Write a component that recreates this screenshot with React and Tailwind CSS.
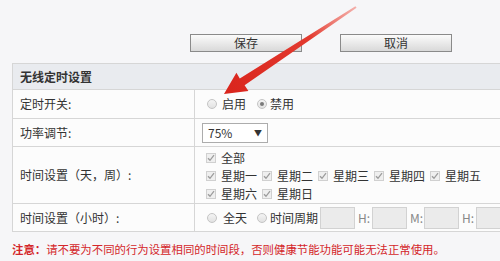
import React from 'react';

const font = "font-['Microsoft_YaHei','Noto_Sans_CJK_SC',sans-serif]";

function Radio({ checked }) {
  return (
    <span className="w-[10px] h-[10px] rounded-full border border-[#c4c4c4] bg-gradient-to-b from-[#f4f4f4] to-[#e2e2e2] flex items-center justify-center shrink-0">
      {checked && <span className="w-[4px] h-[4px] rounded-full bg-[#7a7a7a]" />}
    </span>
  );
}

function Check() {
  return (
    <span className="w-[10px] h-[10px] border border-[#d0d0d0] bg-[#efefef] flex items-center justify-center shrink-0">
      <svg width="8" height="8" viewBox="0 0 8 8">
        <path d="M1 4.2 L3 6.3 L7 1.2" fill="none" stroke="#9c9c9c" strokeWidth="1.3" />
      </svg>
    </span>
  );
}

function Day({ label }) {
  return (
    <span className="flex items-center w-[56px] shrink-0">
      <Check />
      <span className="ml-[5px]">{label}</span>
    </span>
  );
}

function Row({ label, h, children }) {
  return (
    <div className={`flex border-b border-[#d6d6d6] ${h}`}>
      <div className="w-[182px] shrink-0 border-r border-[#d6d6d6] flex items-center pl-[7px]">
        {label}
      </div>
      <div className="flex-1 flex items-center">{children}</div>
    </div>
  );
}

const Box = () => <span className="w-[35px] h-[22px] bg-[#ebebeb] border border-[#d2d2d2] shrink-0" />;

export default function App() {
  return (
    <div className={`w-[500px] h-[261px] overflow-hidden relative bg-[#f6f6f8] text-[12px] text-[#333] ${font}`}>
      {/* buttons */}
      <div className="flex pt-[34px] pl-[190px] gap-[38px]">
        <button className="w-[112px] h-[18px] border border-[#8a8a8a] bg-gradient-to-b from-[#fbfbfb] to-[#d9d9d9] text-[12px] leading-[16px] text-[#333]">
          保存
        </button>
        <button className="w-[112px] h-[18px] border border-[#8a8a8a] bg-gradient-to-b from-[#fbfbfb] to-[#d9d9d9] text-[12px] leading-[16px] text-[#333]">
          取消
        </button>
      </div>

      {/* table */}
      <div className="mt-[11px] ml-[12px] w-[520px] border border-[#d6d6d6] border-b-0 bg-[#fcfcfc]">
        <div className="h-[26px] bg-[#e9ebef] border-b border-[#d6d6d6] flex items-center pl-[7px] font-bold">
          无线定时设置
        </div>
        <Row label="定时开关:" h="h-[29px]">
          <div className="flex items-center pl-[12px]">
            <Radio />
            <span className="ml-[5px]">启用</span>
            <span className="ml-[11px]"><Radio checked /></span>
            <span className="ml-[3px]">禁用</span>
          </div>
        </Row>
        <Row label="功率调节:" h="h-[28px]">
          <div className="ml-[7px] w-[66px] h-[20px] border border-[#acacac] bg-white flex items-center justify-between px-[5px]">
            <span>75%</span>
            <span className="text-[8px] text-[#333]">▼</span>
          </div>
        </Row>
        <Row label="时间设置（天，周）:" h="h-[57px]">
          <div className="flex flex-col pl-[11px] leading-[18px] pt-[1px]">
            <div className="flex items-center"><Day label="全部" /></div>
            <div className="flex items-center">
              <Day label="星期一" />
              <Day label="星期二" />
              <Day label="星期三" />
              <Day label="星期四" />
              <Day label="星期五" />
            </div>
            <div className="flex items-center">
              <Day label="星期六" />
              <Day label="星期日" />
            </div>
          </div>
        </Row>
        <Row label="时间设置（小时）:" h="h-[28px]">
          <div className="flex items-center pl-[12px]">
            <Radio />
            <span className="ml-[6px]">全天</span>
            <span className="ml-[10px]"><Radio /></span>
            <span className="ml-[3px] mr-[2px]">时间周期</span>
            <Box />
            <span className="w-[17px] pl-[3px] text-[#888]">H:</span>
            <Box />
            <span className="w-[17px] pl-[3px] text-[#888]">M:</span>
            <Box />
            <span className="w-[17px] pl-[3px] text-[#888]">H:</span>
            <Box />
          </div>
        </Row>
      </div>

      {/* note */}
      <div className="mt-[10px] ml-[12px] leading-[14px] text-[11.4px] text-[#d4262a] whitespace-nowrap">
        <span className="font-bold">注意：</span>请不要为不同的行为设置相同的时间段，否则健康节能功能可能无法正常使用。
      </div>

      {/* red arrow annotation */}
      <svg className="absolute left-0 top-0 pointer-events-none" width="500" height="261">
        <defs>
          <linearGradient id="ag" x1="356" y1="7" x2="224" y2="94" gradientUnits="userSpaceOnUse">
            <stop offset="0" stopColor="#f06a5e" stopOpacity="0.5" />
            <stop offset="0.35" stopColor="#e33a2f" />
            <stop offset="1" stopColor="#d9241c" />
          </linearGradient>
        </defs>
        <polygon
          points="356.6,7.8 244.6,85.3 248.4,91 224,94 236.4,72.7 239.8,78.5 355.4,6.2"
          fill="url(#ag)"
        />
      </svg>
    </div>
  );
}
